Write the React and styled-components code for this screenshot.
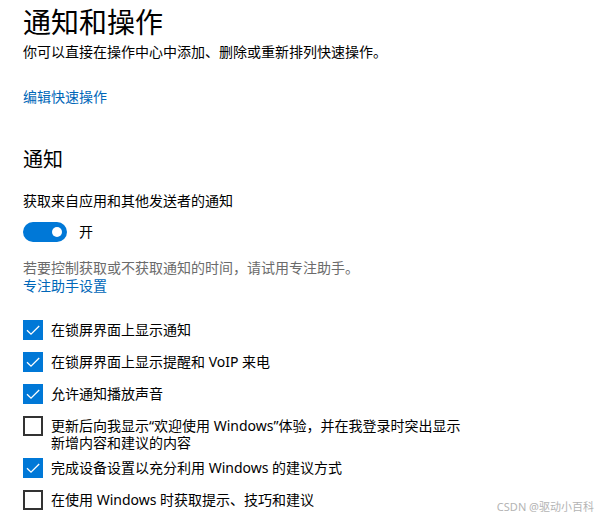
import styled, { createGlobalStyle } from "styled-components"

const Global = createGlobalStyle`
    body {
        margin: 0;
        background: #fff;
        font-family: "Noto Sans", "Noto Sans CJK SC", sans-serif;
        color: #000;
    }
`
const Page = styled.div`
    position: relative;
    width: 600px;
    height: 518px;
    overflow: hidden;
    padding: 4px 23px 0;
    box-sizing: border-box;
`
const Title = styled.h1`
    margin: 0;
    font-size: 28px;
    line-height: 36px;
    font-weight: 400;
`
const Text = styled.p`
    margin: ${props => props.top || 0}px 0 0;
    font-size: 14px;
    line-height: ${props => props.lh || 20}px;
    color: ${props => props.muted ? "#6b6b6b" : "#000"};
`
const Link = styled.a`
    display: block;
    margin-top: ${props => props.top || 0}px;
    font-size: 14px;
    line-height: ${props => props.lh || 20}px;
    color: #0067b8;
    text-decoration: none;
    cursor: pointer;
`
const Heading = styled.h2`
    margin: 39px 0 0;
    font-size: 20px;
    line-height: 28px;
    font-weight: 400;
`
const ToggleRow = styled.div`
    display: flex;
    align-items: center;
    gap: 12px;
    margin-top: 11px;
    height: 20px;
`
const Track = styled.div`
    width: 44px;
    height: 20px;
    border-radius: 10px;
    background: #0078d7;
    position: relative;
`
const Knob = styled.div`
    position: absolute;
    top: 5px;
    right: 5px;
    width: 10px;
    height: 10px;
    border-radius: 50%;
    background: #fff;
`
const ToggleLabel = styled.span`
    font-size: 14px;
    line-height: 20px;
`
const List = styled.div`
    display: flex;
    flex-direction: column;
    gap: 7px;
    margin-top: 25px;
`
const Row = styled.label`
    display: flex;
    align-items: flex-start;
    gap: 8px;
    min-height: 25px;
    cursor: pointer;
`
const Box = styled.span`
    flex: none;
    width: 20px;
    height: 20px;
    box-sizing: border-box;
    background: ${props => props.checked ? "#0078d7" : "#fff"};
    border: ${props => props.checked ? "none" : "2px solid #333"};
    display: flex;
    align-items: center;
    justify-content: center;
`
const Label = styled.span`
    max-width: 415px;
    font-size: 14px;
    line-height: 17px;
    margin-top: 1px;
`
const Watermark = styled.div`
    position: absolute;
    right: 6px;
    bottom: 4px;
    font-size: 11px;
    color: #b4b4b4;
    font-family: "Noto Sans", "Noto Sans CJK SC", sans-serif;
`

const Check = () => (
    <svg width="20" height="20" viewBox="0 0 20 20">
        <path d="M4 10.2 L8 14.2 L16.2 6" fill="none" stroke="#fff" strokeWidth="1.3" />
    </svg>
)

const items = [
    { text: "在锁屏界面上显示通知", checked: true },
    { text: "在锁屏界面上显示提醒和 VoIP 来电", checked: true },
    { text: "允许通知播放声音", checked: true },
    { text: "更新后向我显示“欢迎使用 Windows”体验，并在我登录时突出显示新增内容和建议的内容", checked: false },
    { text: "完成设备设置以充分利用 Windows 的建议方式", checked: true },
    { text: "在使用 Windows 时获取提示、技巧和建议", checked: false },
]

const App = () => {
    return (
        <Page>
            <Global />
            <Title>通知和操作</Title>
            <Text top={2}>你可以直接在操作中心中添加、删除或重新排列快速操作。</Text>
            <Link top={25}>编辑快速操作</Link>

            <Heading>通知</Heading>
            <Text top={17}>获取来自应用和其他发送者的通知</Text>
            <ToggleRow>
                <Track><Knob /></Track>
                <ToggleLabel>开</ToggleLabel>
            </ToggleRow>
            <Text top={17} lh={18} muted>若要控制获取或不获取通知的时间，请试用专注助手。</Text>
            <Link lh={18}>专注助手设置</Link>

            <List>
                {items.map(item => (
                    <Row key={item.text}>
                        <Box checked={item.checked}>{item.checked && <Check />}</Box>
                        <Label>{item.text}</Label>
                    </Row>
                ))}
            </List>
            <Watermark>CSDN @驱动小百科</Watermark>
        </Page>
    )
}

export default App
